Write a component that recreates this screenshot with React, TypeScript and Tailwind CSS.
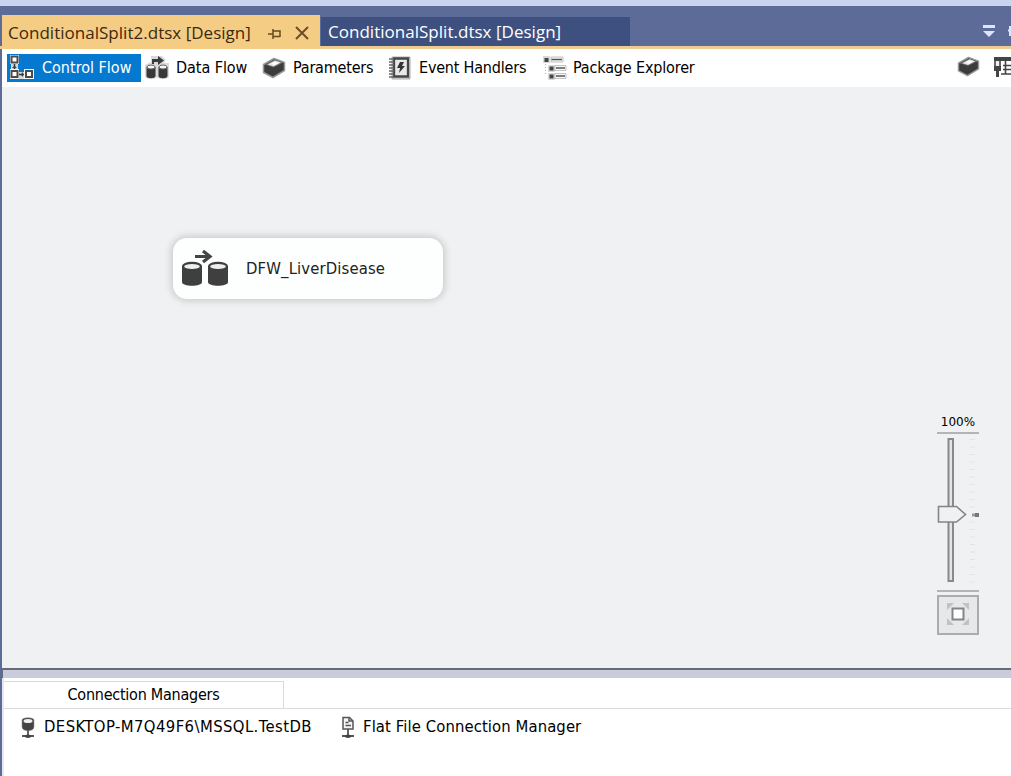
import React from "react";

function CylindersIcon({ className }: { className: string }) {
  return (
    <svg viewBox="0 0 48 38" className={className}>
      <path d="M14 6.5h14M22 1l7 5.5-7 5.5" fill="none" stroke="#444" strokeWidth="3.2" />
      <path d="M1 16v16c0 5 20 5 20 0V16z" fill="#3f3f3f" />
      <ellipse cx="11" cy="16" rx="10" ry="4.3" fill="#3f3f3f" />
      <ellipse cx="11" cy="16.5" rx="7.8" ry="2.500" fill="#eee" />
      <path d="M27 16v16c0 5 20 5 20 0V16z" fill="#3f3f3f" />
      <ellipse cx="37" cy="16" rx="10" ry="4.3" fill="#3f3f3f" />
      <ellipse cx="37" cy="16.5" rx="7.8" ry="2.500" fill="#eee" />
    </svg>
  );
}

function DataFlowIcon() {
  return (
    <svg viewBox="0 0 24 24" className="h-6 w-6 shrink-0">
      <path d="M6 0h11l4 4-2 3h5v13c0 4-11 4-12 1-1 3-12 3-12-1V9l6-3z" fill="#d9d9d9" />
      <path d="M7 6V3h6V0l6 4.500L13 9V6H9v2H7z" fill="#3b3b3b" />
      <path d="M1.500 11v9c0 3 9 3 9 0v-9zM13.500 11v9c0 3 9 3 9 0v-9z" fill="#383838" />
      <ellipse cx="6" cy="11" rx="4" ry="2" fill="#f4f4f4" stroke="#666" />
      <ellipse cx="18" cy="11" rx="4" ry="2" fill="#f4f4f4" stroke="#666" />
    </svg>
  );
}

function ControlFlowIcon() {
  return (
    <svg viewBox="0 0 26 26" className="h-[26px] w-[26px] shrink-0">
      <path d="M2 9h7v5H2zM9 17h6v7H9z" fill="#d6dade" />
      <path d="M5.500 9v7M9 19.500h7" stroke="#333" strokeWidth="1.500" />
      <path d="m3 13 2.500-2.500L8 13zM14 17l-2.500 2.500L14 22z" fill="#444" />
      <path d="M1 0h9v9H1zM1 14h9v10H1zM15 14h10v10H15z" fill="#f4f4f4" />
      <g fill="#fff" stroke="#4b4b4b" strokeWidth="2">
        <path d="M2.500 1.500h6v6h-6zM2.500 16h6v6h-6zM17 16h6v6h-6z" />
      </g>
    </svg>
  );
}

function BoxIcon({ className }: { className: string }) {
  return (
    <svg viewBox="0 0 24 22" className={className}>
      <path d="M1.500 7.500 12 1.500l10.500 4v8L11 20.500l-9.500-5z" fill="#3c3c3c" stroke="#999" strokeWidth="1.500" strokeLinejoin="round" />
      <path d="m2.500 7.500 10-5 9 3-10 5z" fill="#6a6a6a" />
      <path d="m5.500 7.500 7.500-4 6 2-7.500 4z" fill="#e4e4e4" />
      <path d="m9 6.700 4-2 4 1-4.500 2.300z" fill="#fff" />
    </svg>
  );
}

function EventIcon() {
  return (
    <svg viewBox="0 0 22 24" className="h-6 w-[22px] shrink-0">
      <path d="M3 1h18v22H3z" fill="#ddd" stroke="#999" strokeWidth=".8" />
      <path d="M5 2.500h14v18H5z" fill="#e8e8e8" stroke="#464646" strokeWidth="2.300" />
      <path d="M0 3h5M0 6h5M0 9h5M0 12h5M0 15h5M0 18h5M0 21h5" stroke="#666" strokeWidth="1.300" />
      <path d="M11 6h4l-2 4h3l-6 7 1-5H8z" fill="#333" />
    </svg>
  );
}

function ExplorerIcon() {
  return (
    <svg viewBox="0 0 24 24" className="h-6 w-6 shrink-0">
      <path d="M0 0h7v7H0zM5 9h7v7H5zM5 17h7v7H5z" fill="#d8d8d8" />
      <path d="M8 1h12v5H8zM12 9.500h11v5H12zM12 17.500h11v5H12z" fill="#f7f7f7" stroke="#aaa" strokeWidth=".7" />
      <path d="M1.500 2h4v4h-4zM6.500 10.500h4v4h-4zM6.500 18.500h4v4h-4z" fill="#444" />
      <path d="M8.500 3.500H19M13 12h9M13 20h9" stroke="#555" strokeWidth="1.500" />
      <path d="M2.500 8v1M2.500 11v1M2.500 14v1M2.500 17v1" stroke="#bbb" />
    </svg>
  );
}

function DatabaseIcon() {
  return (
    <svg viewBox="0 0 14 22" className="h-[22px] w-[14px] shrink-0">
      <path d="M1 3v7c0 5 12 5 12 0V3c0-3-12-3-12 0z" fill="#444" stroke="#999" strokeWidth=".6" />
      <ellipse cx="7" cy="4" rx="4.500" ry="2" fill="#eee" />
      <path d="M7 13v6M1 19h12" stroke="#555" strokeWidth="1.800" />
      <ellipse cx="7" cy="19.200" rx="3" ry="1.700" fill="#444" />
    </svg>
  );
}

function FlatFileIcon() {
  return (
    <svg viewBox="0 0 14 23" className="h-[23px] w-[14px] shrink-0">
      <path d="M2 1.500h6.500L12 5v8H2z" fill="#f5f5f5" stroke="#555" strokeWidth="1.500" />
      <path d="M8 1v4h4M4.500 6.500h3M4.500 9.500h5.500" fill="none" stroke="#555" strokeWidth="1.400" />
      <path d="M7 13v7M1 20h12" stroke="#555" strokeWidth="1.800" />
      <ellipse cx="7" cy="20.200" rx="3" ry="1.700" fill="#444" />
    </svg>
  );
}

function ZoomControl() {
  return (
    <div className="absolute left-[935px] top-[327px] flex w-[42px] flex-col">
      <div className="flex h-[18px] items-center justify-center whitespace-nowrap pb-[2px] font-['DejaVu_Sans',sans-serif] text-[12px] text-black">100%</div>
      <svg viewBox="0 0 42 160" className="h-[160px] w-[42px]">
        <path d="M0 1h42M0 159h42" stroke="#a0a0a0" strokeWidth="1.500" />
        <path d="M11.500 7h4.500v142h-4.500z" fill="#e3e4e6" stroke="#898989" strokeWidth="2" />
        <path d="M33 7.500h5M33 15h5M33 22.500h5M33 30h5M33 37.500h5M33 45h5M33 52.500h5M33 60h5M33 67.500h5M33 75h5M33 90h5M33 97.500h5M33 105h5M33 112.500h5M33 120h5M33 127.500h5M33 135h5M33 142.500h5M33 150h5" stroke="#e2e3e5" />
        <path d="M1.500 74.500h18l9 8-9 7.500h-18z" fill="#f0f1f2" stroke="#858585" strokeWidth="1.600" />
        <path d="M35 83h3" stroke="#999" strokeWidth="3" />
        <path d="M38 83h4" stroke="#777" strokeWidth="4" />
      </svg>
      <div className="mt-[3px] flex h-10 w-[42px] items-center justify-center border-2 border-[#acacac] bg-[#e7e8e9]">
        <svg viewBox="0 0 24 24" className="mb-[2px] h-6 w-6">
          <path d="M1 8V1h7zM16 1h7v7zM1 16v7h7zM23 16v7h-7z" fill="#c2c2c2" />
          <path d="M6.500 6.500h11v11h-11z" fill="#fff" stroke="#858585" strokeWidth="2" />
        </svg>
      </div>
    </div>
  );
}

export default function App() {
  return (
    <div className="flex h-[776px] w-[1011px] flex-col overflow-hidden bg-white font-['DejaVu_Sans_Condensed','DejaVu_Sans',sans-serif] text-[16px] text-black">
      <div className="h-[6px] shrink-0 bg-[#cad4ee]" />
      <header className="flex h-[43px] shrink-0 items-end border-b-[3px] border-[#edcb91] bg-[#5d6b99] pl-[2px] font-['Open_Sans',sans-serif]">
        <div className="mb-[-3px] flex h-[34px] w-[318px] shrink-0 items-center bg-[#f4cc84] pl-[6px] text-[#3b2a11]">
          <span className="w-[260px] whitespace-nowrap pt-px text-[17px] tracking-[0.02px]">ConditionalSplit2.dtsx [Design]</span>
          <svg viewBox="0 0 14 12" className="mt-[3px] h-3 w-[14px]">
            <path d="M0 6h5M5 1v10M5 3h7v6M5 8.500h7" fill="none" stroke="#644b20" strokeWidth="1.500" />
          </svg>
          <svg viewBox="0 0 14 14" className="ml-[13px] mt-[2px] h-[14px] w-[14px]">
            <path d="m1 1 12 12M13 1 1 13" stroke="#704e24" strokeWidth="2" />
          </svg>
        </div>
        <div className="ml-px flex h-[29px] w-[309px] shrink-0 items-center bg-[#3e5080] pl-[7px] text-white">
          <span className="whitespace-nowrap text-[17px] tracking-[0.02px]">ConditionalSplit.dtsx [Design]</span>
        </div>
        <div className="flex flex-1 items-start justify-end self-stretch pt-[19px]">
          <svg viewBox="0 0 28 12" className="h-3 w-[28px]">
            <path d="M0 0h12v3H0zM0 6h12l-6 6z" fill="#dce5fb" />
            <path d="M27 1v10M25 5.500h3" stroke="#dce5fb" strokeWidth="2" />
          </svg>
        </div>
      </header>
      <div className="flex min-h-0 flex-1 flex-col border-l-2 border-[#5d6b99]">
        <nav className="flex h-[38px] shrink-0 items-center whitespace-nowrap pb-px">
          <div className="ml-[5px] mt-px flex h-7 w-[134px] items-center gap-[7px] bg-[#0579cf] pl-[2px] text-white">
            <ControlFlowIcon />
            <span className="pb-px">Control Flow</span>
          </div>
          <div className="ml-[4px] flex w-[117px] items-center gap-[7px]">
            <DataFlowIcon />
            <span className="tracking-[-0.05px]">Data Flow</span>
          </div>
          <div className="flex w-[127px] items-center gap-[7px]">
            <BoxIcon className="h-[22px] w-6 shrink-0" />
            <span className="tracking-[-0.2px]">Parameters</span>
          </div>
          <div className="flex w-[154px] items-center gap-[8px]">
            <EventIcon />
            <span className="tracking-[-0.2px]">Event Handlers</span>
          </div>
          <div className="flex items-center gap-[6px]">
            <ExplorerIcon />
            <span className="tracking-[-0.15px]">Package Explorer</span>
          </div>
          <div className="ml-auto flex items-center gap-[13px] pb-[2px]">
            <BoxIcon className="h-[21px] w-[23px]" />
            <svg viewBox="0 0 18 22" className="h-[22px] w-[18px]">
              <path d="M1 1h17v4H1z" fill="#444" />
              <path d="M2 3v8M7 3v8M12.500 5v13M10 9.500h8M10 13.500h8M8 18h10" stroke="#444" strokeWidth="1.600" />
              <path d="M1 10h7v5H6v6H3v-6H1z" fill="#444" />
              <path d="M3 5h3v5H3z" fill="#eee" />
            </svg>
          </div>
        </nav>
        <main className="relative h-[581px] shrink-0 bg-[#eff1f3]">
          <div className="absolute left-[171px] top-[151px] flex h-[61px] w-[270px] items-center rounded-[14px] bg-[#fdfefe] pl-[8px] shadow-[0_0_7px_2px_rgba(0,0,0,0.16)]">
            <CylindersIcon className="h-[38px] w-12 shrink-0" />
            <span className="ml-[17px] whitespace-nowrap pt-px text-[16.5px] tracking-[0.14px] text-[#222]">DFW_LiverDisease</span>
          </div>
          <ZoomControl />
        </main>
        <div className="h-[10px] shrink-0 border-l border-t-2 border-[#686a78] bg-[#c9ccda]" />
        <section className="flex min-h-0 flex-1 flex-col border-l-2 border-[#e6e8f0] pt-[3px]">
          <div className="flex h-[28px] shrink-0 border-b border-[#dcdcdf]">
            <div className="flex w-[280px] items-center justify-center border-r border-t border-[#d9dadd] whitespace-nowrap pb-px tracking-[-0.25px]">Connection Managers</div>
          </div>
          <div className="flex h-[37px] items-center whitespace-nowrap">
            <div className="flex w-[320px] items-center pl-[17px]">
              <DatabaseIcon />
              <span className="ml-[9px] text-[16.5px] tracking-[0.42px]">DESKTOP-M7Q49F6\MSSQL.TestDB</span>
            </div>
            <div className="flex items-center pl-[17px]">
              <FlatFileIcon />
              <span className="ml-[8px] text-[16.5px] tracking-[0.1px]">Flat File Connection Manager</span>
            </div>
          </div>
        </section>
      </div>
    </div>
  );
}
